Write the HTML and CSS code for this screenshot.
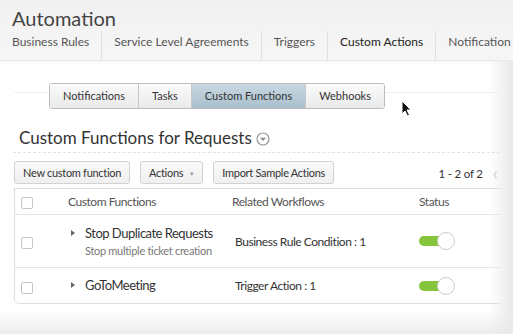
FILE: index.html
```html
<!DOCTYPE html>
<html lang="en">
<head>
    <meta charset="UTF-8">
    <title>Automation - Custom Actions</title>
    <link rel="stylesheet" href="styles.css">
</head>
<body>
    <div class="header">
        <h1>Automation</h1>
        <div class="tabs">
            <div class="tab">Business Rules</div>
            <div class="tab">Service Level Agreements</div>
            <div class="tab">Triggers</div>
            <div class="tab active">Custom Actions</div>
            <div class="tab">Notification Rules</div>
        </div>
    </div>

    <div class="content">
        <div class="segbar">
            <div class="segments">
                <div class="seg">Notifications</div>
                <div class="seg">Tasks</div>
                <div class="seg active">Custom Functions</div>
                <div class="seg">Webhooks</div>
            </div>
        </div>

        <h2 class="title">Custom Functions for Requests
            <svg class="title-icon" width="14" height="14" viewBox="0 0 14 14">
                <circle cx="7" cy="7" r="6" fill="#fff" stroke="#9a9a9a" stroke-width="1.2"/>
                <path d="M4 5.8 L10 5.8 L7 9 Z" fill="#8a8a8a"/>
            </svg>
        </h2>

        <div class="toolbar">
            <button class="btn">New custom function</button>
            <button class="btn">Actions <span class="caret">▼</span></button>
            <button class="btn">Import Sample Actions</button>
            <div class="pager">1 - 2 of 2 <span class="prev">&lsaquo;</span></div>
        </div>

        <div class="table">
            <div class="row head">
                <div class="cell"><span class="check"></span></div>
                <div class="cell">Custom Functions</div>
                <div class="cell">Related Workflows</div>
                <div class="cell">Status</div>
            </div>
            <div class="row tall">
                <div class="cell"><span class="check"></span></div>
                <div class="cell name">
                    <span class="arrow"></span>
                    <div>
                        <div class="fn">Stop Duplicate Requests</div>
                        <div class="desc">Stop multiple ticket creation</div>
                    </div>
                </div>
                <div class="cell wf">Business Rule Condition : 1</div>
                <div class="cell"><span class="toggle"></span></div>
            </div>
            <div class="row">
                <div class="cell"><span class="check"></span></div>
                <div class="cell name">
                    <span class="arrow"></span>
                    <div class="fn">GoToMeeting</div>
                </div>
                <div class="cell wf">Trigger Action : 1</div>
                <div class="cell"><span class="toggle"></span></div>
            </div>
        </div>
    </div>

    <div class="edge"></div>

    <svg class="cursor" width="11" height="17" viewBox="0 0 11 17">
        <path d="M1 1 L1 14 L4 11 L6.5 16 L8.5 15 L6 10 L10 10 Z" fill="#111" stroke="#fff" stroke-width="1"/>
    </svg>
</body>
</html>
```

FILE: styles.css
```css
body {
    margin: 0;
    width: 513px;
    height: 334px;
    overflow: hidden;
    position: relative;
    font-family: Lato, "Open Sans", sans-serif;
    color: #333;
    background: linear-gradient(to bottom, #fff 0, #fff 310px, #ececec 334px);
}
.header {
    height: 60px;
    background: linear-gradient(to bottom, #f1f1f1, #f6f6f6);
    border-bottom: 1px solid #e8e8e8;
    box-shadow: 0 1px 3px rgba(0,0,0,0.05);
}
.header h1 {
    margin: 0;
    padding: 5px 0 0 12px;
    font-size: 20px;
    font-weight: normal;
    line-height: 26px;
    color: #444;
}
.tabs {
    display: flex;
    height: 29px;
    overflow: hidden;
}
.tab {
    padding: 3px 12px 0 12px;
    font-size: 12px;
    color: #555;
    border-right: 1px solid #e0e0e0;
    white-space: nowrap;
    position: relative;
}
.tab.active { color: #222; }
.tab.active::after {
    content: "";
    position: absolute;
    left: 50%;
    bottom: -9px;
    margin-left: -8px;
    border-left: 8px solid transparent;
    border-right: 8px solid transparent;
    border-top: 8px solid #e6e6e6;
}
.content {
    padding: 22px 0 0 14px;
    width: 486px;
}
.segbar {
    position: relative;
    padding-left: 35px;
}
.segbar::before {
    content: "";
    position: absolute;
    left: 0;
    right: 0;
    top: 9px;
    border-top: 1px solid #f0f0f0;
}
.segments {
    position: relative;
    display: inline-flex;
    border: 1px solid #bdbdbd;
    border-radius: 3px;
    overflow: hidden;
}
.seg {
    height: 24px;
    line-height: 24px;
    padding: 0 13px;
    font-size: 11px;
    color: #333;
    background: linear-gradient(to bottom, #fbfbfb, #e9e9e9);
    border-right: 1px solid #c8c8c8;
}
.seg:last-child { border-right: none; }
.seg.active {
    background: linear-gradient(to bottom, #c8d8e2, #a9bfcc);
}
.title {
    margin: 17px 0 0 -1px;
    padding: 0 0 2px 6px;
    font-size: 17px;
    font-weight: normal;
    line-height: 24px;
    color: #333;
    border-bottom: 1px dashed #e2e2e2;
}
.title-icon {
    vertical-align: -2px;
}
.toolbar {
    display: flex;
    align-items: center;
    gap: 10px;
    margin-top: 7px;
}
.btn {
    height: 23px;
    padding: 0 8px;
    font-family: Lato, "Open Sans", sans-serif;
    font-size: 11px;
    letter-spacing: -0.3px;
    color: #333;
    border: 1px solid #d2d2d2;
    border-radius: 3px;
    background: linear-gradient(to bottom, #fafafa, #efefef);
}
.caret {
    font-size: 6px;
    color: #999;
    margin-left: 3px;
    vertical-align: 1px;
}
.pager {
    margin-left: auto;
    font-size: 11.5px;
    letter-spacing: -0.2px;
    color: #333;
    margin-right: 2px;
}
.prev {
    color: #ccc;
    font-size: 20px;
    margin-left: 7px;
    vertical-align: -2px;
}
.table {
    margin-top: 4px;
    border: 1px solid #ddd;
    border-right: none;
    border-bottom-left-radius: 5px;
    width: 486px;
}
.row {
    display: grid;
    grid-template-columns: 53px 164px 187px 1fr;
    align-items: center;
    height: 35px;
    border-top: 1px solid #e6e6e6;
    font-size: 12px;
    letter-spacing: -0.45px;
    color: #333;
}
.row.head {
    height: 25px;
    border-top: none;
    color: #555;
}
.row.tall { height: 52px; }
.cell:first-child { padding-left: 6px; }
.check {
    display: block;
    width: 10px;
    height: 10px;
    border: 1px solid #c6c6c6;
    border-radius: 2px;
    background: #fff;
    margin-top: 4px;
}
.row.head .check { margin-top: 2px; }
.name {
    display: flex;
    align-items: flex-start;
    white-space: nowrap;
}
.arrow {
    width: 0;
    height: 0;
    border-top: 3px solid transparent;
    border-bottom: 3px solid transparent;
    border-left: 4px solid #666;
    margin: 5px 10px 0 3px;
}
.fn { font-size: 13px; letter-spacing: -0.5px; line-height: 17px; }
.desc { font-size: 11px; letter-spacing: -0.3px; color: #777; margin-top: 2px; }
.wf { padding-left: 3px; }
.toggle {
    display: block;
    position: relative;
    width: 30px;
    height: 10px;
    background: #86c43c;
    border-radius: 5px;
}
.toggle::after {
    content: "";
    position: absolute;
    left: 18px;
    top: -4px;
    width: 16px;
    height: 16px;
    border-radius: 50%;
    background: #fff;
    border: 1px solid #ccc;
}
.edge {
    position: absolute;
    top: 60px;
    right: 0;
    width: 24px;
    bottom: 0;
    background: linear-gradient(to right, rgba(235,235,235,0), #e9e9e9);
}
.cursor {
    position: absolute;
    left: 401px;
    top: 100px;
}
```
